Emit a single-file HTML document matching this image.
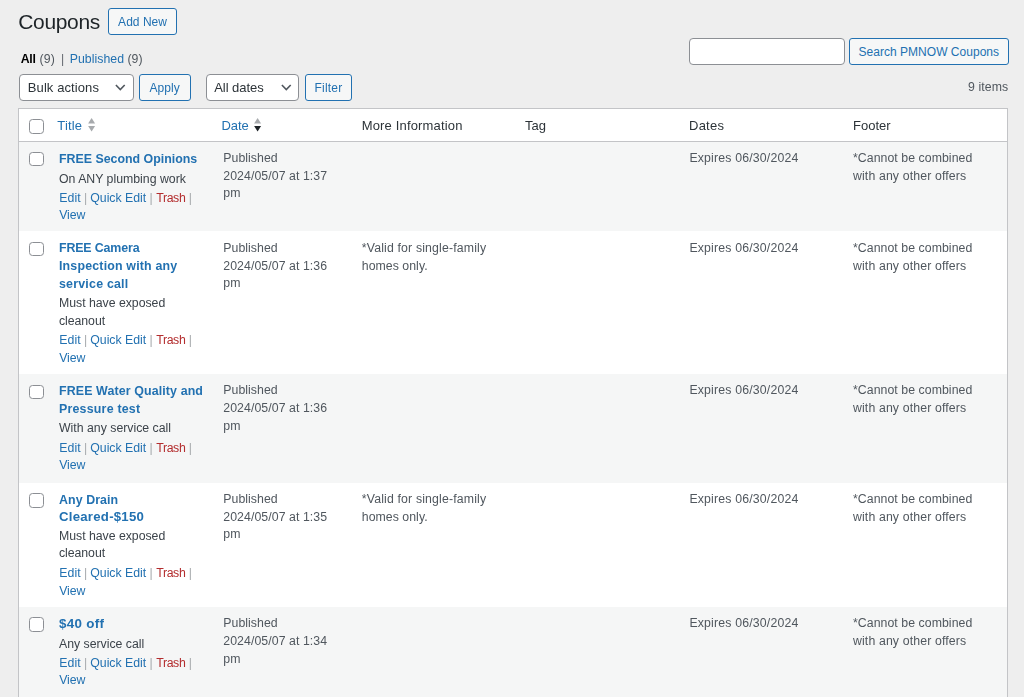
<!DOCTYPE html>
<html><head><meta charset="utf-8"><title>Coupons</title>
<style>
html,body{margin:0;padding:0;}
body{width:1024px;height:697px;overflow:hidden;position:relative;background:#eeeeee;filter:blur(0.3px);font-family:"Liberation Sans",sans-serif;}
.t{position:absolute;white-space:nowrap;}
.b{position:absolute;box-sizing:border-box;}
</style></head><body>
<div class="t " style="left:18.30px;top:9.00px;font-size:21px;line-height:25px;color:#1d2327;letter-spacing:-0.350px;">Coupons</div>
<div class="b" style="left:108px;top:8px;width:69px;height:27px;border:1px solid #2271b1;border-radius:3px;background:#f6f7f7;"></div>
<div class="t " style="left:118.10px;top:14.00px;font-size:12px;line-height:16px;color:#2271b1;letter-spacing:0.034px;">Add New</div>
<div class="t " style="left:20.70px;top:50.85px;font-size:12.3px;line-height:16.3px;color:#000;font-weight:700;letter-spacing:-0.300px;">All</div>
<div class="t " style="left:39.60px;top:50.85px;font-size:12.3px;line-height:16.3px;color:#50575e;letter-spacing:0.100px;">(9)</div>
<div class="t " style="left:61.00px;top:50.85px;font-size:12.3px;line-height:16.3px;color:#646970;">|</div>
<div class="t " style="left:69.70px;top:50.85px;font-size:12.3px;line-height:16.3px;color:#2271b1;letter-spacing:0.042px;">Published</div>
<div class="t " style="left:127.40px;top:50.85px;font-size:12.3px;line-height:16.3px;color:#50575e;letter-spacing:0.100px;">(9)</div>
<div class="b" style="left:689px;top:38px;width:156px;height:27px;border:1px solid #8c8f94;border-radius:4px;background:#fff;"></div>
<div class="b" style="left:848.5px;top:38px;width:160px;height:27px;border:1px solid #2271b1;border-radius:3px;background:#f6f7f7;"></div>
<div class="t " style="left:858.50px;top:44.00px;font-size:12px;line-height:16px;color:#2271b1;letter-spacing:0.025px;">Search PMNOW Coupons</div>
<div class="b" style="left:19px;top:73.5px;width:115px;height:27px;border:1px solid #8c8f94;border-radius:4px;background:#fff;"></div>
<div class="t " style="left:27.80px;top:79.00px;font-size:13px;line-height:17px;color:#2c3338;letter-spacing:0.090px;">Bulk actions</div>
<svg class="b" style="left:115.3px;top:84px" width="11" height="7" viewBox="0 0 11 7"><polyline points="0.9,1.0 5.3,5.5 9.7,1.0" fill="none" stroke="#50575e" stroke-width="1.6"/></svg>
<div class="b" style="left:139px;top:73.5px;width:52px;height:27px;border:1px solid #2271b1;border-radius:3px;background:#f6f7f7;"></div>
<div class="t " style="left:149.50px;top:80.00px;font-size:12px;line-height:16px;color:#2271b1;letter-spacing:0.075px;">Apply</div>
<div class="b" style="left:206px;top:73.5px;width:93px;height:27px;border:1px solid #8c8f94;border-radius:4px;background:#fff;"></div>
<div class="t " style="left:214.20px;top:79.00px;font-size:13px;line-height:17px;color:#2c3338;letter-spacing:-0.052px;">All dates</div>
<svg class="b" style="left:280.6px;top:84px" width="11" height="7" viewBox="0 0 11 7"><polyline points="0.9,1.0 5.3,5.5 9.7,1.0" fill="none" stroke="#50575e" stroke-width="1.6"/></svg>
<div class="b" style="left:304.5px;top:73.5px;width:47.5px;height:27px;border:1px solid #2271b1;border-radius:3px;background:#f6f7f7;"></div>
<div class="t " style="left:314.50px;top:80.00px;font-size:12px;line-height:16px;color:#2271b1;letter-spacing:0.200px;">Filter</div>
<div class="t " style="left:968.00px;top:78.85px;font-size:12.3px;line-height:16.3px;color:#50575e;letter-spacing:0.099px;">9 items</div>
<div class="b" style="left:18px;top:108px;width:990px;height:600px;border:1px solid #c3c4c7;border-bottom:none;background:#fff;"></div>
<div class="b" style="left:19px;top:141px;width:988px;height:1px;background:#c3c4c7;"></div>
<div class="b" style="left:29.3px;top:119.1px;width:14.5px;height:14.5px;border:1px solid #8c8f94;border-radius:3.5px;background:#fff;"></div>
<div class="t " style="left:57.30px;top:117.00px;font-size:13px;line-height:17px;color:#2271b1;letter-spacing:0.150px;">Title</div>
<div class="t " style="left:221.40px;top:117.00px;font-size:13px;line-height:17px;color:#2271b1;letter-spacing:0.001px;">Date</div>
<div class="t " style="left:361.70px;top:117.00px;font-size:13px;line-height:17px;color:#2c3338;letter-spacing:0.167px;">More Information</div>
<div class="t " style="left:525.00px;top:117.00px;font-size:13px;line-height:17px;color:#2c3338;">Tag</div>
<div class="t " style="left:689.00px;top:117.00px;font-size:13px;line-height:17px;color:#2c3338;letter-spacing:0.250px;">Dates</div>
<div class="t " style="left:853.00px;top:117.00px;font-size:13px;line-height:17px;color:#2c3338;">Footer</div>
<svg class="b" style="left:88.1px;top:117px" width="8" height="16" viewBox="0 0 8 16"><polygon points="0.1,6.5 3.6,1.0 7.1,6.5" fill="#a7aaad"/><polygon points="0.1,9.0 7.1,9.0 3.6,14.6" fill="#a7aaad"/></svg>
<svg class="b" style="left:253.7px;top:117px" width="8" height="16" viewBox="0 0 8 16"><polygon points="0.1,6.5 3.6,1.0 7.1,6.5" fill="#a7aaad"/><polygon points="0.1,9.0 7.1,9.0 3.6,14.6" fill="#1d2327"/></svg>
<div class="b" style="left:19px;top:142px;width:988px;height:89px;background:#f5f6f6;"></div>
<div class="b" style="left:19px;top:231px;width:988px;height:143px;background:#fff;"></div>
<div class="b" style="left:19px;top:374px;width:988px;height:109px;background:#f5f6f6;"></div>
<div class="b" style="left:19px;top:483px;width:988px;height:124px;background:#fff;"></div>
<div class="b" style="left:19px;top:607px;width:988px;height:90px;background:#f5f6f6;"></div>
<div class="b" style="left:29.3px;top:151.9px;width:14.5px;height:14.5px;border:1px solid #8c8f94;border-radius:3.5px;background:#fff;"></div>
<div class="t " style="left:59.00px;top:150.80px;font-size:12.4px;line-height:16.4px;color:#2271b1;font-weight:700;letter-spacing:-0.009px;">FREE Second Opinions</div>
<div class="t " style="left:59.00px;top:170.85px;font-size:12.3px;line-height:16.3px;color:#3c434a;">On ANY plumbing work</div>
<div class="t " style="left:59.20px;top:189.85px;font-size:12.3px;line-height:16.3px;color:#2271b1;letter-spacing:0.132px;">Edit</div>
<div class="t " style="left:83.90px;top:189.85px;font-size:12.3px;line-height:16.3px;color:#a7aaad;">|</div>
<div class="t " style="left:90.30px;top:189.85px;font-size:12.3px;line-height:16.3px;color:#2271b1;letter-spacing:-0.023px;">Quick Edit</div>
<div class="t " style="left:149.50px;top:189.85px;font-size:12.3px;line-height:16.3px;color:#a7aaad;">|</div>
<div class="t " style="left:156.30px;top:189.85px;font-size:12.3px;line-height:16.3px;color:#b32d2e;letter-spacing:-0.388px;">Trash</div>
<div class="t " style="left:188.80px;top:189.85px;font-size:12.3px;line-height:16.3px;color:#a7aaad;">|</div>
<div class="t " style="left:59.20px;top:206.85px;font-size:12.3px;line-height:16.3px;color:#2271b1;letter-spacing:-0.067px;">View</div>
<div class="t " style="left:223.30px;top:149.85px;font-size:12.3px;line-height:16.3px;color:#50575e;letter-spacing:0.042px;">Published</div>
<div class="t " style="left:223.30px;top:167.85px;font-size:12.3px;line-height:16.3px;color:#50575e;letter-spacing:0.070px;">2024/05/07 at 1:37</div>
<div class="t " style="left:223.30px;top:184.85px;font-size:12.3px;line-height:16.3px;color:#50575e;">pm</div>
<div class="t " style="left:689.40px;top:149.85px;font-size:12.3px;line-height:16.3px;color:#50575e;letter-spacing:0.176px;">Expires 06/30/2024</div>
<div class="t " style="left:853.00px;top:149.85px;font-size:12.3px;line-height:16.3px;color:#50575e;letter-spacing:0.056px;">*Cannot be combined</div>
<div class="t " style="left:853.00px;top:167.85px;font-size:12.3px;line-height:16.3px;color:#50575e;letter-spacing:0.130px;">with any other offers</div>
<div class="b" style="left:29.3px;top:241.8px;width:14.5px;height:14.5px;border:1px solid #8c8f94;border-radius:3.5px;background:#fff;"></div>
<div class="t " style="left:59.00px;top:239.80px;font-size:12.4px;line-height:16.4px;color:#2271b1;font-weight:700;letter-spacing:-0.140px;">FREE Camera</div>
<div class="t " style="left:59.00px;top:257.80px;font-size:12.4px;line-height:16.4px;color:#2271b1;font-weight:700;letter-spacing:0.178px;">Inspection with any</div>
<div class="t " style="left:59.00px;top:275.80px;font-size:12.4px;line-height:16.4px;color:#2271b1;font-weight:700;letter-spacing:0.218px;">service call</div>
<div class="t " style="left:59.00px;top:294.85px;font-size:12.3px;line-height:16.3px;color:#3c434a;letter-spacing:-0.025px;">Must have exposed</div>
<div class="t " style="left:59.00px;top:312.85px;font-size:12.3px;line-height:16.3px;color:#3c434a;letter-spacing:-0.056px;">cleanout</div>
<div class="t " style="left:59.20px;top:331.85px;font-size:12.3px;line-height:16.3px;color:#2271b1;letter-spacing:0.132px;">Edit</div>
<div class="t " style="left:83.90px;top:331.85px;font-size:12.3px;line-height:16.3px;color:#a7aaad;">|</div>
<div class="t " style="left:90.30px;top:331.85px;font-size:12.3px;line-height:16.3px;color:#2271b1;letter-spacing:-0.023px;">Quick Edit</div>
<div class="t " style="left:149.50px;top:331.85px;font-size:12.3px;line-height:16.3px;color:#a7aaad;">|</div>
<div class="t " style="left:156.30px;top:331.85px;font-size:12.3px;line-height:16.3px;color:#b32d2e;letter-spacing:-0.388px;">Trash</div>
<div class="t " style="left:188.80px;top:331.85px;font-size:12.3px;line-height:16.3px;color:#a7aaad;">|</div>
<div class="t " style="left:59.20px;top:349.85px;font-size:12.3px;line-height:16.3px;color:#2271b1;letter-spacing:-0.067px;">View</div>
<div class="t " style="left:223.30px;top:239.85px;font-size:12.3px;line-height:16.3px;color:#50575e;letter-spacing:0.042px;">Published</div>
<div class="t " style="left:223.30px;top:257.85px;font-size:12.3px;line-height:16.3px;color:#50575e;letter-spacing:0.070px;">2024/05/07 at 1:36</div>
<div class="t " style="left:223.30px;top:274.85px;font-size:12.3px;line-height:16.3px;color:#50575e;">pm</div>
<div class="t " style="left:361.80px;top:239.85px;font-size:12.3px;line-height:16.3px;color:#50575e;letter-spacing:0.157px;">*Valid for single-family</div>
<div class="t " style="left:361.80px;top:257.85px;font-size:12.3px;line-height:16.3px;color:#50575e;letter-spacing:0.040px;">homes only.</div>
<div class="t " style="left:689.40px;top:239.85px;font-size:12.3px;line-height:16.3px;color:#50575e;letter-spacing:0.176px;">Expires 06/30/2024</div>
<div class="t " style="left:853.00px;top:239.85px;font-size:12.3px;line-height:16.3px;color:#50575e;letter-spacing:0.056px;">*Cannot be combined</div>
<div class="t " style="left:853.00px;top:257.85px;font-size:12.3px;line-height:16.3px;color:#50575e;letter-spacing:0.130px;">with any other offers</div>
<div class="b" style="left:29.3px;top:384.5px;width:14.5px;height:14.5px;border:1px solid #8c8f94;border-radius:3.5px;background:#fff;"></div>
<div class="t " style="left:59.00px;top:382.80px;font-size:12.4px;line-height:16.4px;color:#2271b1;font-weight:700;letter-spacing:0.122px;">FREE Water Quality and</div>
<div class="t " style="left:59.00px;top:400.80px;font-size:12.4px;line-height:16.4px;color:#2271b1;font-weight:700;letter-spacing:0.215px;">Pressure test</div>
<div class="t " style="left:59.00px;top:419.85px;font-size:12.3px;line-height:16.3px;color:#3c434a;">With any service call</div>
<div class="t " style="left:59.20px;top:439.85px;font-size:12.3px;line-height:16.3px;color:#2271b1;letter-spacing:0.132px;">Edit</div>
<div class="t " style="left:83.90px;top:439.85px;font-size:12.3px;line-height:16.3px;color:#a7aaad;">|</div>
<div class="t " style="left:90.30px;top:439.85px;font-size:12.3px;line-height:16.3px;color:#2271b1;letter-spacing:-0.023px;">Quick Edit</div>
<div class="t " style="left:149.50px;top:439.85px;font-size:12.3px;line-height:16.3px;color:#a7aaad;">|</div>
<div class="t " style="left:156.30px;top:439.85px;font-size:12.3px;line-height:16.3px;color:#b32d2e;letter-spacing:-0.388px;">Trash</div>
<div class="t " style="left:188.80px;top:439.85px;font-size:12.3px;line-height:16.3px;color:#a7aaad;">|</div>
<div class="t " style="left:59.20px;top:456.85px;font-size:12.3px;line-height:16.3px;color:#2271b1;letter-spacing:-0.067px;">View</div>
<div class="t " style="left:223.30px;top:381.85px;font-size:12.3px;line-height:16.3px;color:#50575e;letter-spacing:0.042px;">Published</div>
<div class="t " style="left:223.30px;top:399.85px;font-size:12.3px;line-height:16.3px;color:#50575e;letter-spacing:0.070px;">2024/05/07 at 1:36</div>
<div class="t " style="left:223.30px;top:417.85px;font-size:12.3px;line-height:16.3px;color:#50575e;">pm</div>
<div class="t " style="left:689.40px;top:381.85px;font-size:12.3px;line-height:16.3px;color:#50575e;letter-spacing:0.176px;">Expires 06/30/2024</div>
<div class="t " style="left:853.00px;top:381.85px;font-size:12.3px;line-height:16.3px;color:#50575e;letter-spacing:0.056px;">*Cannot be combined</div>
<div class="t " style="left:853.00px;top:399.85px;font-size:12.3px;line-height:16.3px;color:#50575e;letter-spacing:0.130px;">with any other offers</div>
<div class="b" style="left:29.3px;top:493.0px;width:14.5px;height:14.5px;border:1px solid #8c8f94;border-radius:3.5px;background:#fff;"></div>
<div class="t " style="left:59.00px;top:491.80px;font-size:12.4px;line-height:16.4px;color:#2271b1;font-weight:700;letter-spacing:0.075px;">Any Drain</div>
<div class="t " style="left:59.00px;top:507.90px;font-size:13.2px;line-height:17.2px;color:#2271b1;font-weight:700;letter-spacing:0.250px;">Cleared-$150</div>
<div class="t " style="left:59.00px;top:527.85px;font-size:12.3px;line-height:16.3px;color:#3c434a;letter-spacing:-0.025px;">Must have exposed</div>
<div class="t " style="left:59.00px;top:544.85px;font-size:12.3px;line-height:16.3px;color:#3c434a;letter-spacing:-0.056px;">cleanout</div>
<div class="t " style="left:59.20px;top:564.85px;font-size:12.3px;line-height:16.3px;color:#2271b1;letter-spacing:0.132px;">Edit</div>
<div class="t " style="left:83.90px;top:564.85px;font-size:12.3px;line-height:16.3px;color:#a7aaad;">|</div>
<div class="t " style="left:90.30px;top:564.85px;font-size:12.3px;line-height:16.3px;color:#2271b1;letter-spacing:-0.023px;">Quick Edit</div>
<div class="t " style="left:149.50px;top:564.85px;font-size:12.3px;line-height:16.3px;color:#a7aaad;">|</div>
<div class="t " style="left:156.30px;top:564.85px;font-size:12.3px;line-height:16.3px;color:#b32d2e;letter-spacing:-0.388px;">Trash</div>
<div class="t " style="left:188.80px;top:564.85px;font-size:12.3px;line-height:16.3px;color:#a7aaad;">|</div>
<div class="t " style="left:59.20px;top:582.85px;font-size:12.3px;line-height:16.3px;color:#2271b1;letter-spacing:-0.067px;">View</div>
<div class="t " style="left:223.30px;top:490.85px;font-size:12.3px;line-height:16.3px;color:#50575e;letter-spacing:0.042px;">Published</div>
<div class="t " style="left:223.30px;top:508.85px;font-size:12.3px;line-height:16.3px;color:#50575e;letter-spacing:0.070px;">2024/05/07 at 1:35</div>
<div class="t " style="left:223.30px;top:525.85px;font-size:12.3px;line-height:16.3px;color:#50575e;">pm</div>
<div class="t " style="left:361.80px;top:490.85px;font-size:12.3px;line-height:16.3px;color:#50575e;letter-spacing:0.157px;">*Valid for single-family</div>
<div class="t " style="left:361.80px;top:508.85px;font-size:12.3px;line-height:16.3px;color:#50575e;letter-spacing:0.040px;">homes only.</div>
<div class="t " style="left:689.40px;top:490.85px;font-size:12.3px;line-height:16.3px;color:#50575e;letter-spacing:0.176px;">Expires 06/30/2024</div>
<div class="t " style="left:853.00px;top:490.85px;font-size:12.3px;line-height:16.3px;color:#50575e;letter-spacing:0.056px;">*Cannot be combined</div>
<div class="t " style="left:853.00px;top:508.85px;font-size:12.3px;line-height:16.3px;color:#50575e;letter-spacing:0.130px;">with any other offers</div>
<div class="b" style="left:29.3px;top:617.3px;width:14.5px;height:14.5px;border:1px solid #8c8f94;border-radius:3.5px;background:#fff;"></div>
<div class="t " style="left:59.00px;top:614.80px;font-size:13.4px;line-height:17.4px;color:#2271b1;font-weight:700;letter-spacing:0.300px;">$40 off</div>
<div class="t " style="left:59.00px;top:635.85px;font-size:12.3px;line-height:16.3px;color:#3c434a;letter-spacing:-0.014px;">Any service call</div>
<div class="t " style="left:59.20px;top:654.85px;font-size:12.3px;line-height:16.3px;color:#2271b1;letter-spacing:0.132px;">Edit</div>
<div class="t " style="left:83.90px;top:654.85px;font-size:12.3px;line-height:16.3px;color:#a7aaad;">|</div>
<div class="t " style="left:90.30px;top:654.85px;font-size:12.3px;line-height:16.3px;color:#2271b1;letter-spacing:-0.023px;">Quick Edit</div>
<div class="t " style="left:149.50px;top:654.85px;font-size:12.3px;line-height:16.3px;color:#a7aaad;">|</div>
<div class="t " style="left:156.30px;top:654.85px;font-size:12.3px;line-height:16.3px;color:#b32d2e;letter-spacing:-0.388px;">Trash</div>
<div class="t " style="left:188.80px;top:654.85px;font-size:12.3px;line-height:16.3px;color:#a7aaad;">|</div>
<div class="t " style="left:59.20px;top:671.85px;font-size:12.3px;line-height:16.3px;color:#2271b1;letter-spacing:-0.067px;">View</div>
<div class="t " style="left:223.30px;top:614.85px;font-size:12.3px;line-height:16.3px;color:#50575e;letter-spacing:0.042px;">Published</div>
<div class="t " style="left:223.30px;top:632.85px;font-size:12.3px;line-height:16.3px;color:#50575e;letter-spacing:0.070px;">2024/05/07 at 1:34</div>
<div class="t " style="left:223.30px;top:650.85px;font-size:12.3px;line-height:16.3px;color:#50575e;">pm</div>
<div class="t " style="left:689.40px;top:614.85px;font-size:12.3px;line-height:16.3px;color:#50575e;letter-spacing:0.176px;">Expires 06/30/2024</div>
<div class="t " style="left:853.00px;top:614.85px;font-size:12.3px;line-height:16.3px;color:#50575e;letter-spacing:0.056px;">*Cannot be combined</div>
<div class="t " style="left:853.00px;top:632.85px;font-size:12.3px;line-height:16.3px;color:#50575e;letter-spacing:0.130px;">with any other offers</div>
</body></html>
